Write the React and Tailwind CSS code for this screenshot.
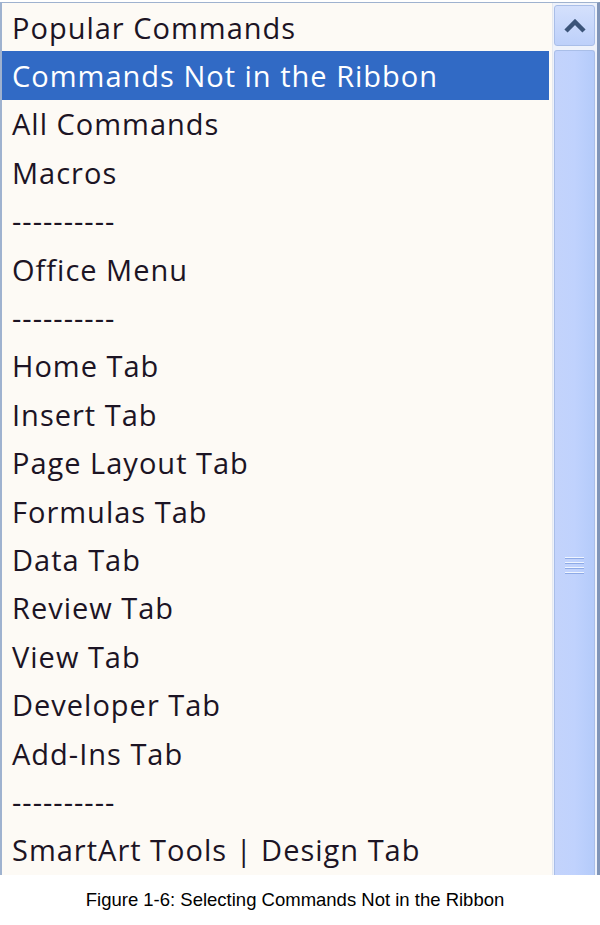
import React from 'react';

const items = [
  'Popular Commands',
  'Commands Not in the Ribbon',
  'All Commands',
  'Macros',
  '----------',
  'Office Menu',
  '----------',
  'Home Tab',
  'Insert Tab',
  'Page Layout Tab',
  'Formulas Tab',
  'Data Tab',
  'Review Tab',
  'View Tab',
  'Developer Tab',
  'Add-Ins Tab',
  '----------',
  'SmartArt Tools | Design Tab',
];

function ScrollBar() {
  return (
    <div className="w-[45px] flex flex-col bg-[#eef2fb] border-l border-[#e4e8f0] pl-[1px] pr-[2px] pt-[2px] gap-[4px]">
      {/* up arrow button */}
      <div className="h-[41px] rounded-[3px] border border-[#a9bee8] bg-gradient-to-b from-[#d4e0fc] to-[#bdd0fa] flex items-center justify-center">
        <svg width="22" height="14" viewBox="0 0 22 14">
          <path d="M2 12 L11 3 L20 12" fill="none" stroke="#3b5479" strokeWidth="4.5" strokeLinejoin="miter" />
        </svg>
      </div>
      {/* thumb */}
      <div className="flex-1 rounded-t-[3px] border border-b-0 border-[#a9bee8] bg-gradient-to-r from-[#c3d3fb] via-[#c0d2fd] to-[#b4cbfa] flex flex-col items-center pt-[506px]">
        <div className="flex flex-col gap-[3px]">
          <div className="w-[19px] h-[2px] bg-[#eef4ff] border-b border-[#8eaae6]" />
          <div className="w-[19px] h-[2px] bg-[#eef4ff] border-b border-[#8eaae6]" />
          <div className="w-[19px] h-[2px] bg-[#eef4ff] border-b border-[#8eaae6]" />
          <div className="w-[19px] h-[2px] bg-[#eef4ff] border-b border-[#8eaae6]" />
        </div>
      </div>
    </div>
  );
}

export default function App() {
  return (
    <div className="w-[600px] h-[925px] bg-white flex flex-col">
      <div className="h-[873px] mt-[2px] flex border-l-2 border-t border-[#9fb2cf] border-r-[3px] border-r-[#8095b8] bg-[#fdfaf5]">
        <div className="flex-1 flex flex-col pr-[3px]">
          {items.map((item, i) => (
            <div
              key={i}
              className={`h-[48.4px] shrink-0 flex items-center pl-[10px] text-[29px] leading-none font-['Open_Sans',sans-serif] tracking-[1px] ${
                i === 1 ? 'bg-[#316ac5] text-white' : 'text-[#1c1424]'
              }`}
            >
              {item}
            </div>
          ))}
        </div>
        <ScrollBar />
      </div>
      <div className="flex-1 flex items-center justify-center pr-[10px] pb-[1px] text-[18.5px] text-black font-['Liberation_Sans',Arial,sans-serif]">
        Figure 1-6: Selecting Commands Not in the Ribbon
      </div>
    </div>
  );
}
